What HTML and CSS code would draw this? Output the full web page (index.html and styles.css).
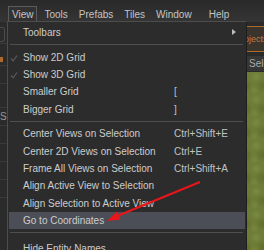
FILE: index.html
```html
<!DOCTYPE html>
<html lang="en">
<head>
    <meta charset="UTF-8">
    <title>Editor - View menu</title>
    <link rel="stylesheet" href="styles.css">
</head>
<body>
    <div class="app">
        <!-- Top menu bar -->
        <div class="menubar">
            <span class="menubar-item active">View</span>
            <span class="menubar-item">Tools</span>
            <span class="menubar-item">Prefabs</span>
            <span class="menubar-item">Tiles</span>
            <span class="menubar-item wide">Window</span>
            <span class="menubar-item">Help</span>
        </div>

        <!-- Editor behind the menu -->
        <div class="workspace">
            <div class="side-left">
                <div class="left-row tall"><span class="left-btn"></span></div>
                <div class="left-row orange"><span class="left-orange"></span></div>
                <div class="left-row"></div>
                <div class="left-row high"></div>
                <div class="left-row label">S</div>
                <div class="left-row"></div>
                <div class="left-row"></div>
                <div class="left-row"></div>
                <div class="left-row"></div>
            </div>
            <div class="side-right">
                <div class="tab-orange">Objects</div>
                <div class="tab-gray">Select</div>
                <div class="terrain"></div>
            </div>
        </div>

        <!-- Open dropdown -->
        <div class="dropdown">
            <div class="item"><span class="check"></span><span class="label">Toolbars</span><span class="key"></span><span class="sub"></span></div>
            <div class="sep"></div>
            <div class="item">
                <span class="check"><svg width="14" height="17" viewBox="0 0 14 17"><polyline points="2,9.5 4.2,11.8 8,6.5" fill="none" stroke="#5a5a5a" stroke-width="1.2"/></svg></span>
                <span class="label">Show 2D Grid</span><span class="key"></span>
            </div>
            <div class="item">
                <span class="check"><svg width="14" height="17" viewBox="0 0 14 17"><polyline points="2,9.5 4.2,11.8 8,6.5" fill="none" stroke="#5a5a5a" stroke-width="1.2"/></svg></span>
                <span class="label">Show 3D Grid</span><span class="key"></span>
            </div>
            <div class="item"><span class="check"></span><span class="label">Smaller Grid</span><span class="key">[</span></div>
            <div class="item"><span class="check"></span><span class="label">Bigger Grid</span><span class="key">]</span></div>
            <div class="sep"></div>
            <div class="item"><span class="check"></span><span class="label">Center Views on Selection</span><span class="key">Ctrl+Shift+E</span></div>
            <div class="item"><span class="check"></span><span class="label">Center 2D Views on Selection</span><span class="key">Ctrl+E</span></div>
            <div class="item"><span class="check"></span><span class="label">Frame All Views on Selection</span><span class="key">Ctrl+Shift+A</span></div>
            <div class="item"><span class="check"></span><span class="label">Align Active View to Selection</span><span class="key"></span></div>
            <div class="item"><span class="check"></span><span class="label">Align Selection to Active View</span><span class="key"></span></div>
            <div class="item hover"><span class="check"></span><span class="label">Go to Coordinates</span><span class="key"></span></div>
            <div class="sep wide"></div>
            <div class="item"><span class="check"></span><span class="label">Hide Entity Names</span><span class="key"></span></div>
        </div>

        <!-- Red annotation arrow -->
        <svg class="arrow" width="264" height="250" viewBox="0 0 264 250">
            <line x1="200" y1="182" x2="116" y2="216.5" stroke="#e8151b" stroke-width="2"/>
            <polygon points="107,221 117,211.5 120.5,219.5" fill="#e8151b"/>
        </svg>
    </div>
</body>
</html>
```

FILE: styles.css
```css
body {
    margin: 0;
    background-color: #262626;
    font-family: "Liberation Sans", Arial, sans-serif;
}

.app {
    position: relative;
    width: 264px;
    height: 250px;
    overflow: hidden;
    background-color: #262626;
}

/* menu bar */
.menubar {
    display: flex;
    align-items: flex-end;
    height: 22px;
    padding-left: 8px;
    box-sizing: border-box;
    background: linear-gradient(#292929, #353535);
    font-size: 10px;
    color: #c4c4c4;
}

.menubar-item {
    height: 16px;
    line-height: 15px;
    padding: 0 2px 0 3px;
    margin-right: 4px;
    border: 1px solid transparent;
    border-bottom: none;
    box-sizing: border-box;
    white-space: nowrap;
}

.menubar-item.wide {
    margin-right: 10px;
}

.menubar-item.active {
    border-color: #5c5c5c;
    background-color: #323232;
}

/* background editor */
.workspace {
    display: flex;
    height: 228px;
}

.side-left {
    width: 8px;
    background-color: #2b2b2b;
}

.left-row {
    height: 17px;
    border-bottom: 1px solid #3a3a3a;
    font-size: 10px;
    line-height: 17px;
    color: #999;
}

.left-row.tall {
    height: 22px;
    padding-top: 5px;
    box-sizing: border-box;
}

.left-row.high {
    height: 23px;
}

.left-btn {
    display: block;
    width: 4px;
    height: 13px;
    border: 1px solid #4c4c4c;
    border-left: none;
    border-radius: 0 3px 3px 0;
}

.left-row.orange {
    height: 21px;
    display: flex;
    align-items: flex-end;
}

.left-orange {
    width: 3px;
    height: 5px;
    margin-bottom: 3px;
    background-color: #b0692c;
}

.side-right {
    width: 64px;
    margin-left: auto;
    display: flex;
    flex-direction: column;
    background-color: #2a2a2a;
}

.tab-orange {
    height: 26px;
    margin-top: 4px;
    padding-left: 36px;
    border: 1px solid #b0692c;
    border-right: none;
    box-sizing: border-box;
    background-color: #3b342d;
    color: #c47a3a;
    font-size: 9px;
    line-height: 24px;
    white-space: nowrap;
}

.tab-gray {
    height: 15px;
    margin-top: 4px;
    padding-left: 49px;
    background-color: #363636;
    color: #aaa;
    font-size: 10px;
    line-height: 15px;
    white-space: nowrap;
}

.terrain {
    flex: 1;
    margin-top: 1px;
    background-color: #6d7c36;
    background-image:
        radial-gradient(circle at 30% 20%, #7b8b40 0, transparent 6px),
        radial-gradient(circle at 70% 60%, #5f6e2d 0, transparent 7px),
        radial-gradient(circle at 20% 80%, #778740 0, transparent 5px);
    background-size: 17px 23px;
}

/* dropdown menu */
.dropdown {
    position: absolute;
    left: 7px;
    top: 21px;
    width: 240px;
    height: 240px;
    box-sizing: border-box;
    padding-top: 2px;
    background-color: #2c2c2c;
    border: 1px solid #4d4d4d;
    border-right-color: #1e1e1e;
    font-size: 10px;
    color: #cdcdcd;
}

.item {
    display: flex;
    align-items: center;
    height: 17.4px;
    margin: 0 1px;
    position: relative;
}

.item > span {
    flex-shrink: 0;
}

.item.hover {
    background-color: #4b4e56;
}

.check {
    width: 14px;
    height: 17px;
}

.check svg {
    display: block;
}

.label {
    width: 151px;
    white-space: nowrap;
}

.key {
    color: #c2c2c2;
    white-space: nowrap;
}

.sub {
    position: absolute;
    right: 9px;
    top: 5px;
    border-left: 4px solid #bdbdbd;
    border-top: 3px solid transparent;
    border-bottom: 3px solid transparent;
}

.sep {
    height: 7px;
    box-sizing: border-box;
    padding-top: 3px;
}

.sep.wide {
    height: 11px;
}

.sep::after {
    content: "";
    display: block;
    height: 1px;
    margin: 0 3px 0 2px;
    background-color: #4f4f4f;
}

.arrow {
    position: absolute;
    left: 0;
    top: 0;
}
```
